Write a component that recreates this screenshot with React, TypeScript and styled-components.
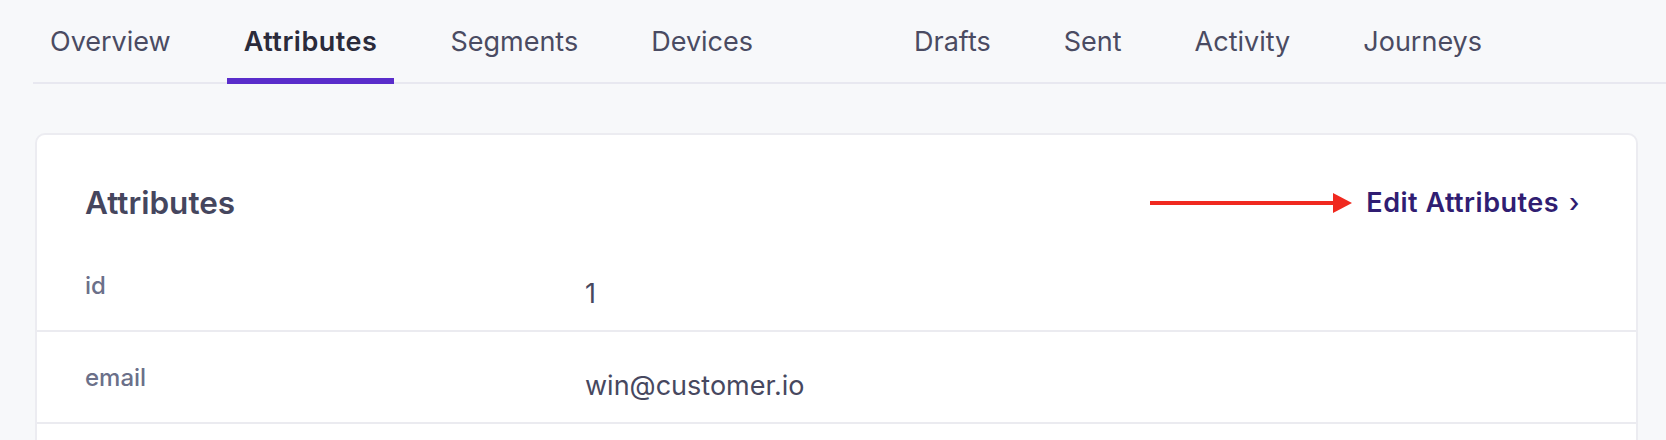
import React from "react";
import styled, { createGlobalStyle } from "styled-components";

const GlobalStyle = createGlobalStyle`
  html, body {
    margin: 0;
    padding: 0;
    background: #f7f8fa;
    font-family: Inter, "Noto Sans", "Liberation Sans", sans-serif;
    -webkit-font-smoothing: antialiased;
  }
  * { box-sizing: border-box; }
`;

const Page = styled.div`
  width: 1666px;
  height: 440px;
  overflow: hidden;
  padding: 0 28px 0 33px;
  background: #f7f8fa;
`;

const TabBar = styled.nav`
  display: flex;
  align-items: flex-end;
  border-bottom: 2px solid #e8e8f0;
  margin-right: -28px;
`;

const Tab = styled.a<{ $active?: boolean; $spaced?: boolean }>`
  display: block;
  padding: 24px 17px 18px;
  margin-right: 39px;
  margin-left: ${(p) => (p.$spaced ? "88px" : "0")};
  margin-bottom: -2px;
  font-size: 27px;
  line-height: 36px;
  font-weight: ${(p) => (p.$active ? 600 : 400)};
  letter-spacing: ${(p) => (p.$active ? "0.5px" : "0")};
  color: ${(p) => (p.$active ? "#2b2b3b" : "#4a4b62")};
  border-bottom: 6px solid ${(p) => (p.$active ? "#5a2dcb" : "transparent")};
  white-space: nowrap;
  cursor: pointer;
`;

const Card = styled.section`
  margin-top: 49px;
  margin-left: 2px;
  background: #ffffff;
  border: 2px solid #ececf1;
  border-radius: 10px;
  padding-bottom: 60px;
`;

const CardHeader = styled.header`
  display: flex;
  align-items: baseline;
  justify-content: space-between;
  padding: 48px 56px 17px 48px;
`;

const Heading = styled.h2`
  margin: 0;
  font-size: 31.5px;
  line-height: 40px;
  font-weight: 600;
  color: #45465e;
`;

const EditGroup = styled.div`
  display: flex;
  align-items: center;
  gap: 14px;
`;

const EditLink = styled.a`
  display: flex;
  align-items: baseline;
  gap: 10px;
  font-size: 27px;
  line-height: 36px;
  font-weight: 600;
  letter-spacing: 0.5px;
  color: #301d72;
  cursor: pointer;
`;

const Chevron = styled.span`
  font-size: 26px;
  font-weight: 500;
`;

const Row = styled.div`
  display: grid;
  grid-template-columns: 500px 1fr;
  align-items: start;
  height: 92px;
  padding: 30px 48px 0;
  border-bottom: 2px solid #ebebf0;
`;

const Label = styled.div`
  font-size: 24px;
  line-height: 32px;
  font-weight: 500;
  color: #6b7089;
`;

const Value = styled.div`
  margin-top: 6px;
  font-size: 27px;
  line-height: 36px;
  font-weight: 400;
  color: #47485f;
`;

const Arrow = () => (
  <svg width="202" height="22" viewBox="0 0 202 22" aria-hidden="true">
    <rect x="0" y="9" width="186" height="4" fill="#f0291f" />
    <polygon points="183,1 202,11 183,21" fill="#f0291f" />
  </svg>
);

const tabs = [
  { label: "Overview" },
  { label: "Attributes", active: true },
  { label: "Segments" },
  { label: "Devices" },
  { label: "Drafts", spaced: true },
  { label: "Sent" },
  { label: "Activity" },
  { label: "Journeys" },
];

const attributes = [
  { key: "id", value: "1" },
  { key: "email", value: "win@customer.io" },
];

export default function App() {
  return (
    <>
      <GlobalStyle />
      <Page>
        <TabBar>
          {tabs.map((t) => (
            <Tab key={t.label} $active={t.active} $spaced={t.spaced}>
              {t.label}
            </Tab>
          ))}
        </TabBar>
        <Card>
          <CardHeader>
            <Heading>Attributes</Heading>
            <EditGroup>
              <Arrow />
              <EditLink>
                Edit Attributes <Chevron>›</Chevron>
              </EditLink>
            </EditGroup>
          </CardHeader>
          {attributes.map((a) => (
            <Row key={a.key}>
              <Label>{a.key}</Label>
              <Value>{a.value}</Value>
            </Row>
          ))}
        </Card>
      </Page>
    </>
  );
}
